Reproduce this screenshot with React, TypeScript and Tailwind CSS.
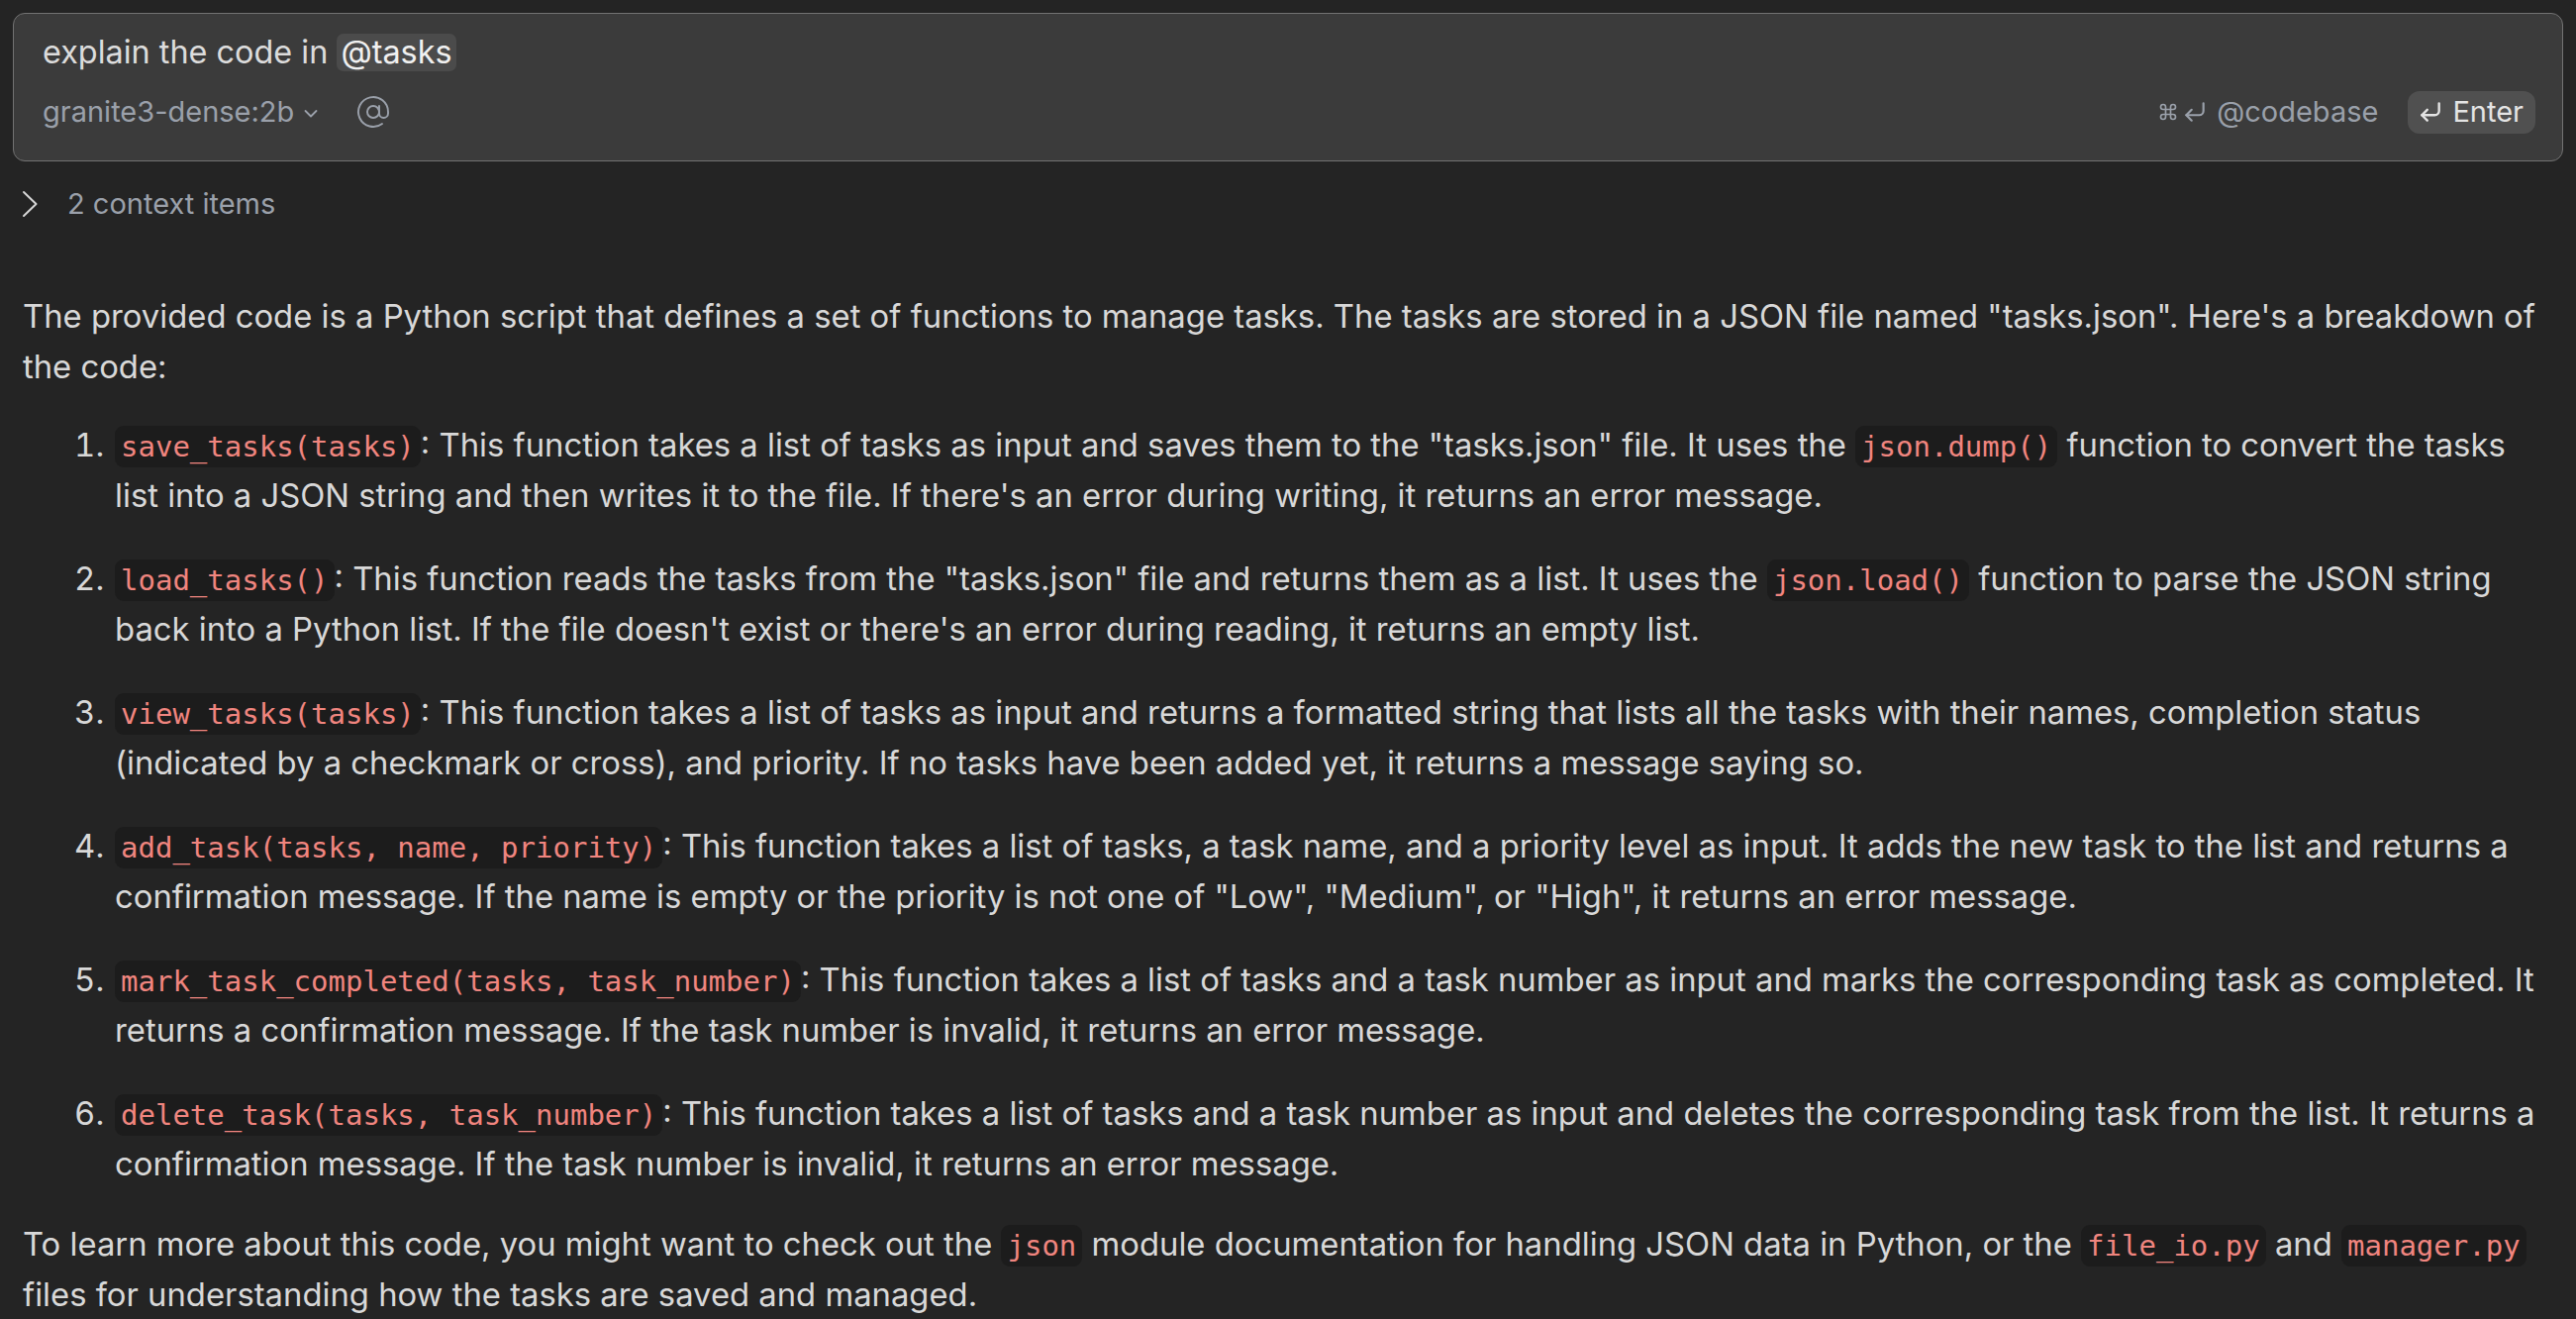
import React from 'react'
import { AtSign, Command, CornerDownLeft } from 'lucide-react'

type Seg = string | { code: string }

const c = (code: string) => ({ code })

const items: Seg[][][] = [
    [
        [c('save_tasks(tasks)'), ': This function takes a list of tasks as input and saves them to the "tasks.json" file. It uses the ', c('json.dump()'), ' function to convert the tasks'],
        ["list into a JSON string and then writes it to the file. If there's an error during writing, it returns an error message."],
    ],
    [
        [c('load_tasks()'), ': This function reads the tasks from the "tasks.json" file and returns them as a list. It uses the ', c('json.load()'), ' function to parse the JSON string'],
        ["back into a Python list. If the file doesn't exist or there's an error during reading, it returns an empty list."],
    ],
    [
        [c('view_tasks(tasks)'), ': This function takes a list of tasks as input and returns a formatted string that lists all the tasks with their names, completion status'],
        ['(indicated by a checkmark or cross), and priority. If no tasks have been added yet, it returns a message saying so.'],
    ],
    [
        [c('add_task(tasks, name, priority)'), ': This function takes a list of tasks, a task name, and a priority level as input. It adds the new task to the list and returns a'],
        ['confirmation message. If the name is empty or the priority is not one of "Low", "Medium", or "High", it returns an error message.'],
    ],
    [
        [c('mark_task_completed(tasks, task_number)'), ': This function takes a list of tasks and a task number as input and marks the corresponding task as completed. It'],
        ['returns a confirmation message. If the task number is invalid, it returns an error message.'],
    ],
    [
        [c('delete_task(tasks, task_number)'), ': This function takes a list of tasks and a task number as input and deletes the corresponding task from the list. It returns a'],
        ['confirmation message. If the task number is invalid, it returns an error message.'],
    ],
]

const Code = ({ children }: any) => (
    <code className="rounded-[9px] bg-[#1c1c1c] px-[6px] py-[4px] font-['DejaVu_Sans_Mono',monospace] text-[29px] leading-none text-[#f0857f]">
        {children}
    </code>
)

const Lines = ({ lines }: { lines: Seg[][] }) => (
    <>
        {lines.map((line, li) => (
            <React.Fragment key={li}>
                {li > 0 && <br />}
                {line.map((s, si) =>
                    typeof s === 'string' ? <React.Fragment key={si}>{s}</React.Fragment> : <Code key={si}>{s.code}</Code>
                )}
            </React.Fragment>
        ))}
    </>
)

const InputBox = () => {
    return (
        <div className="flex h-[150px] flex-col rounded-[12px] border-[1.5px] border-[#727272] bg-[#3b3b3b] pl-[29px] pr-[27px] pt-[19px]">
            <div className="flex h-[40px] items-center text-[32.4px] text-[#dcdcdc]">
                <span>explain the code in&nbsp;</span>
                <span className="rounded-[7px] bg-[#4b4b4b] px-[4px] leading-[38px] text-[#f0f0f0]">@tasks</span>
            </div>
            <div className="mt-[20px] flex h-[40px] items-center text-[29px] text-[#9aa0aa]">
                <span>granite3-dense:2b</span>
                <svg className="ml-[10px] mt-[4px]" width="14" height="10" viewBox="0 0 14 10" fill="none" stroke="currentColor" strokeWidth="1.8" strokeLinecap="round" strokeLinejoin="round">
                    <polyline points="1.5,2 7,7.5 12.5,2" />
                </svg>
                <AtSign className="ml-[38px] h-[36px] w-[36px]" strokeWidth={1.3} />
                <div className="flex-1" />
                <Command className="h-[20px] w-[20px]" strokeWidth={2} />
                <CornerDownLeft className="ml-[4px] h-[26px] w-[26px]" strokeWidth={2} />
                <span className="ml-[9px]">@codebase</span>
                <div className="ml-[30px] flex h-[43px] items-center gap-[9px] rounded-[12px] bg-[#505050] pl-[10px] pr-[12px] text-[#e4e4e4]">
                    <CornerDownLeft className="h-[26px] w-[26px]" strokeWidth={2.2} />
                    <span>Enter</span>
                </div>
            </div>
        </div>
    )
}

export default function App() {
    return (
        <div className="min-h-screen bg-[#242424] pl-[13px] pr-[8px] pt-[13px] pb-[20px] font-['Inter',sans-serif]">
            <div className="pr-[5px]">
                <InputBox />
            </div>
            <div className="mt-[23px] flex h-[40px] items-center text-[29px] text-[#9aa0aa]">
                <svg className="ml-[9px]" width="17" height="28" viewBox="0 0 17 28" fill="none" stroke="#d6d6d6" strokeWidth="2" strokeLinecap="round" strokeLinejoin="round">
                    <polyline points="2,2 14.5,14 2,26" />
                </svg>
                <span className="ml-[29px]">2 context items</span>
            </div>
            <div className="mt-[68px] whitespace-nowrap pl-[10px] text-[32.8px] leading-[51px] text-[#d8d8d8]">
                <p>
                    The provided code is a Python script that defines a set of functions to manage tasks. The tasks are stored in a JSON file named "tasks.json". Here's a breakdown of
                    <br />
                    the code:
                </p>
                <ol className="mt-[28px] mb-[30px] flex list-decimal flex-col gap-[33px] pl-[91px]">
                    {items.map((lines, i) => (
                        <li key={i} className="pl-[2px]">
                            <Lines lines={lines} />
                        </li>
                    ))}
                </ol>
                <p>
                    To learn more about this code, you might want to check out the <Code>json</Code> module documentation for handling JSON data in Python, or the <Code>file_io.py</Code> and <Code>manager.py</Code>
                    <br />
                    files for understanding how the tasks are saved and managed.
                </p>
            </div>
        </div>
    )
}
